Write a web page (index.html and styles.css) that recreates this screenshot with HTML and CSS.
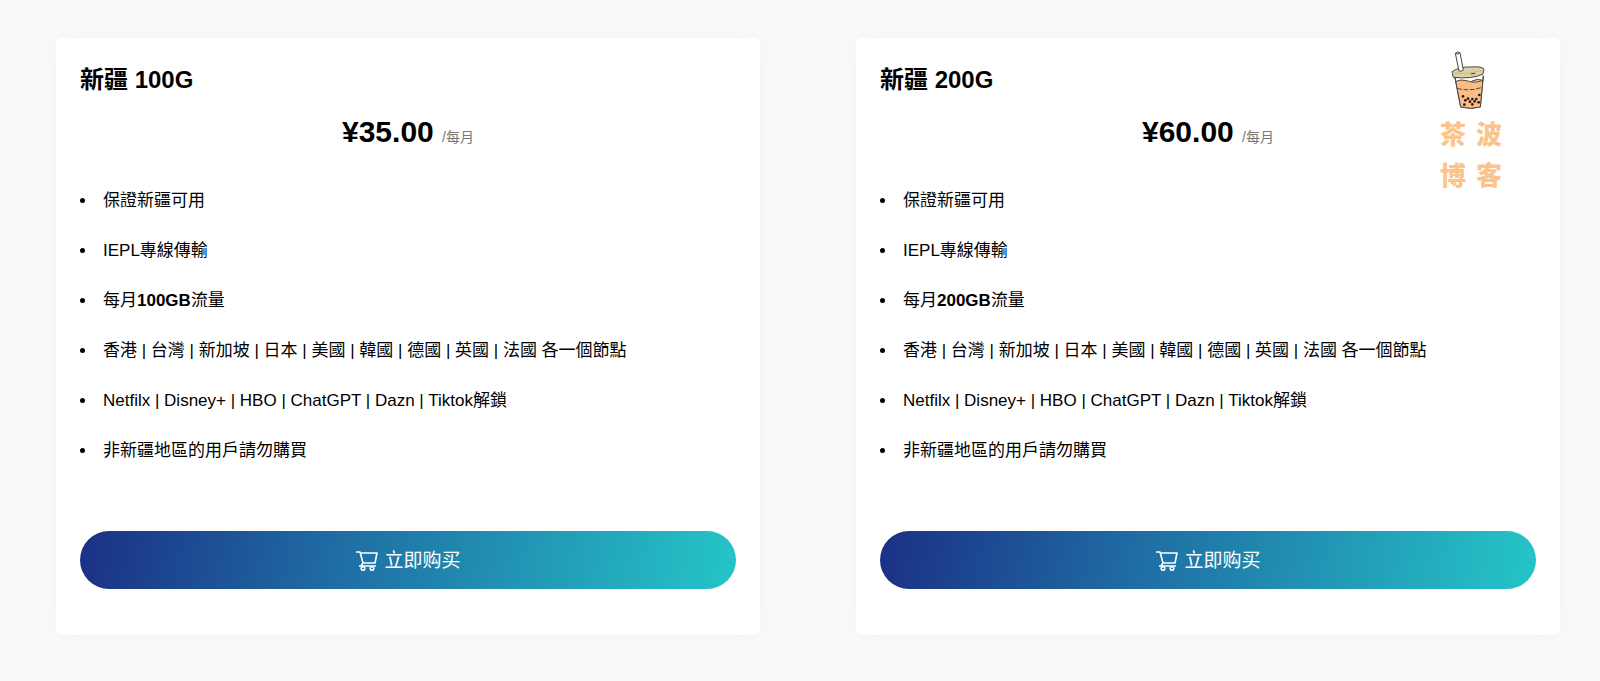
FILE: index.html
```
<!DOCTYPE html>
<html lang="zh-Hant">
<head>
    <meta charset="UTF-8">
    <meta name="viewport" content="width=device-width, initial-scale=1.0">
    <title>新疆</title>
    <link rel="stylesheet" href="styles.css">
</head>
<body>
    <main class="plans">
        <section class="card">
            <h2 class="plan-name">新疆 100G</h2>
            <div class="price">¥35.00 <span class="period">/每月</span></div>
            <ul class="features">
                <li>保證新疆可用</li>
                <li>IEPL專線傳輸</li>
                <li>每月<strong>100GB</strong>流量</li>
                <li>香港 | 台灣 | 新加坡 | 日本 | 美國 | 韓國 | 德國 | 英國 | 法國 各一個節點</li>
                <li>Netfilx | Disney+ | HBO | ChatGPT | Dazn | Tiktok解鎖</li>
                <li>非新疆地區的用戶請勿購買</li>
            </ul>
            <button type="button" class="buy-button">
                <svg class="cart-icon" viewBox="0 0 24 22" aria-hidden="true">
                    <path d="M1 3h4l3 11h12l2-10H5.400M4 17h17M8 14l-2 3"/>
                    <circle cx="8" cy="19.500" r="1.800"/>
                    <circle cx="17" cy="19.500" r="1.800"/>
                </svg>
                <span lang="zh-Hans">立即购买</span>
            </button>
        </section>

        <section class="card">
            <h2 class="plan-name">新疆 200G</h2>
            <div class="price">¥60.00 <span class="period">/每月</span></div>
            <ul class="features">
                <li>保證新疆可用</li>
                <li>IEPL專線傳輸</li>
                <li>每月<strong>200GB</strong>流量</li>
                <li>香港 | 台灣 | 新加坡 | 日本 | 美國 | 韓國 | 德國 | 英國 | 法國 各一個節點</li>
                <li>Netfilx | Disney+ | HBO | ChatGPT | Dazn | Tiktok解鎖</li>
                <li>非新疆地區的用戶請勿購買</li>
            </ul>
            <button type="button" class="buy-button">
                <svg class="cart-icon" viewBox="0 0 24 22" aria-hidden="true">
                    <path d="M1 3h4l3 11h12l2-10H5.400M4 17h17M8 14l-2 3"/>
                    <circle cx="8" cy="19.500" r="1.800"/>
                    <circle cx="17" cy="19.500" r="1.800"/>
                </svg>
                <span lang="zh-Hans">立即购买</span>
            </button>

            <!-- Blog watermark -->
            <div class="watermark">
                <svg class="tea-icon" viewBox="0 0 180 210" aria-hidden="true">
                    <path d="M45 98L62 186Q92 194 121 186L130 92" fill="#fff"/>
                    <path d="M49 110Q62 102 82 107Q108 118 128 108L121 185Q92 192 63 186Z" fill="#fbbd86" stroke="none"/>
                    <path d="M45 98L62 186Q92 194 121 186L130 92" fill="none"/>
                    <path d="M48 109Q62 102 80 107Q104 117 129 106Q112 99 94 109" fill="#fbbd86"/>
                    <path d="M52 130Q88 140 126 127" fill="none" stroke-dasharray="14 5"/>
                    <path d="M36 80Q60 64 92 66Q124 63 132 72L129 87Q98 103 40 97Z" fill="#ddd0a2"/>
                    <path d="M37 82Q66 92 131 75" fill="none" stroke="#c5bd8c"/>
                    <path d="M92 87l14-2" fill="none"/>
                    <path d="M46 25Q53 18 60 23L70 75Q65 80 57 78Z" fill="#fff"/>
                    <path d="M46 25Q54 30 60 23" fill="none"/>
                    <g fill="#1b1a18" stroke="none">
                        <circle cx="69" cy="154" r="4"/>
                        <circle cx="118" cy="150" r="4"/>
                        <circle cx="84" cy="161" r="4"/>
                        <circle cx="97" cy="162" r="4"/>
                        <circle cx="109" cy="162" r="4"/>
                        <circle cx="76" cy="166" r="4"/>
                        <circle cx="90" cy="170" r="4"/>
                        <circle cx="104" cy="169" r="4"/>
                        <circle cx="116" cy="172" r="4"/>
                        <circle cx="73" cy="179" r="4"/>
                        <circle cx="97" cy="178" r="4"/>
                    </g>
                </svg>
                <div class="watermark-text">
                    <span>茶</span><span>波</span>
                    <span>博</span><span>客</span>
                </div>
            </div>
        </section>
    </main>
</body>
</html>
```
FILE: styles.css
```
* {
    box-sizing: border-box;
}
body {
    font-family: "Liberation Sans", "Noto Sans CJK TC", sans-serif;
    margin: 0;
    background-color: #fafafa;
    color: #000;
}
.plans {
    display: grid;
    grid-template-columns: 1fr 1fr;
    gap: 96px;
    padding: 38px 40px 46px 56px;
}
.card {
    position: relative;
    padding: 25px 24px 46px;
    background-color: #fff;
    border-radius: 6px;
    box-shadow: 0 0 24px rgba(0, 0, 0, 0.04);
}
.plan-name {
    margin: 0;
    font-size: 24px;
    line-height: 34px;
}
.price {
    margin-top: 15px;
    font-size: 30px;
    font-weight: bold;
    line-height: 40px;
    text-align: center;
}
.period {
    color: #777;
    font-size: 14px;
    font-weight: normal;
}
.features {
    margin: 19px 0 55px;
    padding: 0;
    font-size: 17px;
    line-height: 50px;
    list-style-position: inside;
}
.buy-button {
    display: flex;
    align-items: center;
    justify-content: center;
    gap: 5px;
    width: 100%;
    height: 58px;
    padding: 0 0 4px;
    border: none;
    border-radius: 29px;
    background: linear-gradient(100deg, #1b3085, #1f6ba3 38%, #25c5c8);
    color: #fff;
    font-family: "Liberation Sans", "Noto Sans CJK SC", sans-serif;
    font-size: 19px;
    cursor: pointer;
}
.cart-icon {
    width: 24px;
    height: 22px;
    margin-top: 3px;
    fill: none;
    stroke: #fff;
    stroke-width: 1.6;
    stroke-linejoin: round;
}
.watermark {
    position: absolute;
    top: 7px;
    right: 58px;
    pointer-events: none;
}
.tea-icon {
    display: block;
    width: 60px;
    height: 70px;
    stroke: #4a4640;
    stroke-width: 3;
    stroke-linejoin: round;
}
.watermark-text {
    display: grid;
    grid-template-columns: 26px 26px;
    column-gap: 10px;
    margin-top: -3px;
    color: #fbc48c;
    font-family: "Noto Sans CJK SC", sans-serif;
    font-size: 26px;
    font-weight: 900;
    line-height: 41px;
}
```
